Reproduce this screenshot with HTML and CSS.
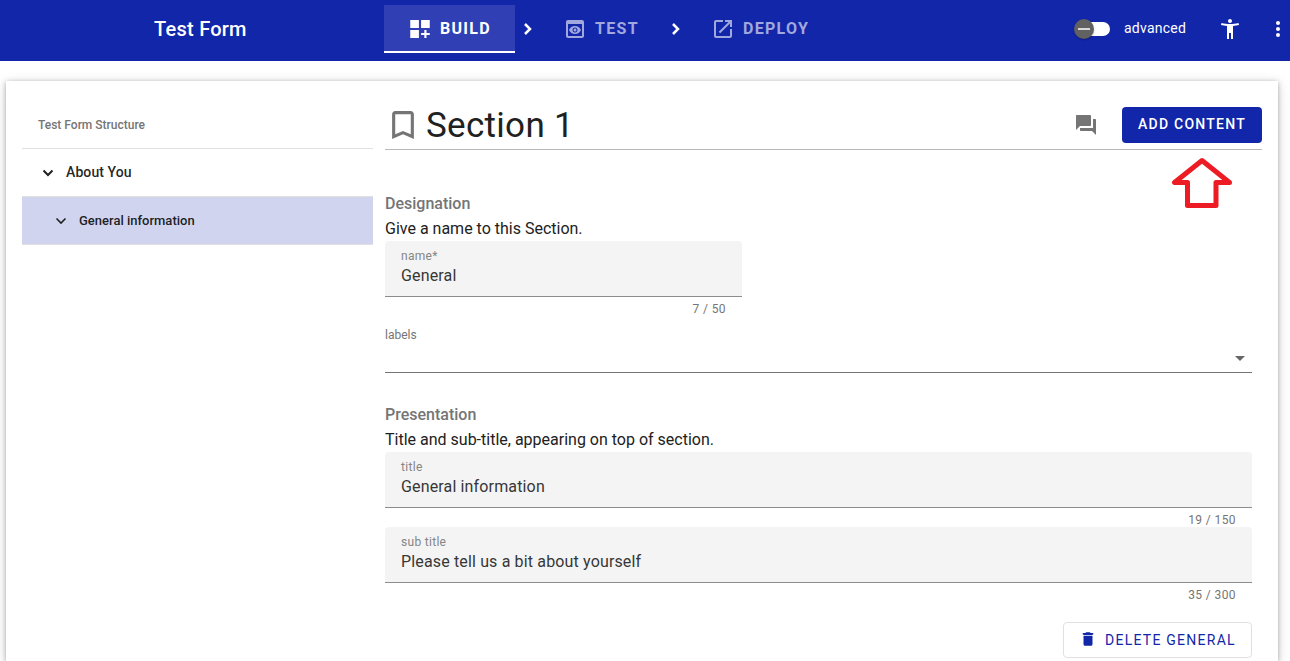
FILE: index.html
```html
<!DOCTYPE html>
<html lang="en">
<head>
<meta charset="utf-8">
<title>Test Form</title>
<link rel="stylesheet" href="styles.css">
</head>
<body>
<header class="topbar">
  <div class="form-name">Test Form</div>
  <nav class="steps">
    <a class="step active"><svg class="icon build-icon" viewBox="0 0 24 24" preserveAspectRatio="none"><path d="M3 3h8v8H3zM13 3h8v8h-8zM3 13h8v8H3zM18 13h-2v3h-3v2h3v3h2v-3h3v-2h-3z"/></svg><span>BUILD</span></a>
    <svg class="arrow" viewBox="0 0 10 14"><path d="M2 2l5 5-5 5"/></svg>
    <a class="step test"><svg class="icon" viewBox="0 0 24 24"><path d="M19 3H5c-1.110 0-2 .9-2 2v14c0 1.100.890 2 2 2h14c1.100 0 2-.9 2-2V5c0-1.100-.890-2-2-2zm0 16H5V7h14v12zm-5.500-6c0 .830-.670 1.500-1.500 1.500s-1.500-.670-1.500-1.500.670-1.500 1.500-1.500 1.500.670 1.500 1.500zM12 9c-2.730 0-5.060 1.660-6 4 .940 2.340 3.270 4 6 4s5.060-1.660 6-4c-.940-2.340-3.270-4-6-4zm0 6.500c-1.380 0-2.500-1.120-2.500-2.500s1.120-2.500 2.500-2.500 2.500 1.120 2.500 2.500-1.120 2.500-2.500 2.500z"/></svg><span>TEST</span></a>
    <svg class="arrow" viewBox="0 0 10 14"><path d="M2 2l5 5-5 5"/></svg>
    <a class="step deploy"><svg class="icon" viewBox="0 0 24 24"><path d="M19 19H5V5h7V3H5a2 2 0 0 0-2 2v14a2 2 0 0 0 2 2h14c1.100 0 2-.9 2-2v-7h-2v7zM14 3v2h3.590l-9.830 9.830 1.410 1.410L19 6.410V10h2V3h-7z"/></svg><span>DEPLOY</span></a>
  </nav>
  <div class="tools">
    <div class="switch"><div class="thumb"></div></div>
    <span class="switch-label">advanced</span>
    <svg class="icon person" viewBox="0 0 24 24"><path d="M20.500 6c-2.610.7-5.670 1-8.500 1s-5.890-.3-8.500-1L3 8c1.860.5 4 .830 6 1v13h2v-6h2v6h2V9c2-.170 4.140-.5 6-1l-.5-2zM12 6c1.100 0 2-.9 2-2s-.9-2-2-2-2 .9-2 2 .9 2 2 2z"/></svg>
    <svg class="icon" viewBox="0 0 24 24"><circle cx="12" cy="6" r="2"/><circle cx="12" cy="12" r="2"/><circle cx="12" cy="18" r="2"/></svg>
  </div>
</header>

<div class="card">
  <aside class="sidebar">
    <div class="side-title">Test Form Structure</div>
    <div class="node"><svg class="caret" viewBox="0 0 12 8"><path d="M1.500 1.500L6 6l4.500-4.500"/></svg>About You</div>
    <div class="node child"><svg class="caret" viewBox="0 0 12 8"><path d="M1.500 1.500L6 6l4.500-4.500"/></svg>General information</div>
  </aside>

  <main class="main">
    <div class="section-head">
      <svg class="bookmark" viewBox="3 1 18 22" preserveAspectRatio="none"><path d="M17 3H7c-1.100 0-2 .9-2 2v16l7-3 7 3V5c0-1.100-.9-2-2-2zm0 15l-5-2.180L7 18V5h10v13z"/></svg>
      <h1>Section 1</h1>
      <svg class="icon chat" viewBox="0 0 24 24"><path d="M21 6h-2v9H6v2c0 .550.450 1 1 1h11l4 4V7c0-.550-.450-1-1-1zm-4 6V3c0-.550-.450-1-1-1H3c-.550 0-1 .450-1 1v14l4-4h10c.550 0 1-.450 1-1z"/></svg>
      <div class="add">ADD CONTENT
        <svg class="pointer" viewBox="0 0 62 52"><path d="M31 3.500L3.500 25.500H16.500V48.500H45V25.500H58.500Z"/></svg>
      </div>
    </div>

    <div class="fields">
      <h2>Designation</h2>
      <p>Give a name to this Section.</p>
      <div class="field short"><label>name*</label><div class="value">General</div></div>
      <div class="count short">7 / 50</div>
      <div class="select"><span>labels</span><svg viewBox="0 0 10 5"><path d="M0 0h10L5 5z"/></svg></div>
      <h2 class="second">Presentation</h2>
      <p>Title and sub-title, appearing on top of section.</p>
      <div class="field"><label>title</label><div class="value">General information</div></div>
      <div class="count">19 / 150</div>
      <div class="field"><label>sub title</label><div class="value">Please tell us a bit about yourself</div></div>
      <div class="count">35 / 300</div>
      <div class="actions"><div class="delete"><svg viewBox="0 0 24 24"><path d="M6 19c0 1.100.9 2 2 2h8c1.100 0 2-.9 2-2V7H6v12zM19 4h-3.500l-1-1h-5l-1 1H5v2h14V4z M6 6h12v2H6z"/></svg><span>DELETE GENERAL</span></div></div>
    </div>
  </main>
</div>
</body>
</html>
```

FILE: styles.css
```css
* { box-sizing: border-box; }
html, body { height: 661px; overflow: hidden; }
body { margin: 0; background: #fff; font-family: Roboto, sans-serif; color: rgba(0,0,0,.87); }
h1, h2, p { margin: 0; }
svg { display: block; flex: none; }
.icon { width: 24px; height: 24px; fill: currentColor; }

.topbar { height: 61px; background: #1226aa; color: #fff; display: flex; }
.form-name { width: 384px; padding: 17px 0 0 154px; font-size: 20px; line-height: 24px; font-weight: 500; letter-spacing: .25px; }
.steps { display: flex; padding-top: 5px; height: 53px; align-items: flex-start; }
.step { display: flex; height: 48px; align-items: center; font-size: 16px; font-weight: 700; letter-spacing: 1.300px; color: #a0a8dd; }
.step span { line-height: 20px; margin-top: 0; }
.step.active { width: 131px; padding-left: 23px; background: #303fb4; color: #fff; border-bottom: 2px solid #fff; }
.step.active span { margin-top: 2px; margin-left: 7px; }
.build-icon { width: 26px; margin-top: 2px; }
.arrow { width: 10px; height: 14px; margin: 17px 0 0 8px; fill: none; stroke: #fff; stroke-width: 2.500; }
.test { margin-left: 30px; width: 107px; }
.test span, .deploy span { margin-left: 8px; }
.test + .arrow { margin-left: 1px; }
.deploy { margin-left: 30px; }
.tools { margin-left: auto; display: flex; padding-top: 17px; }
.switch { width: 34px; height: 14px; margin-top: 5px; border-radius: 7px; background: #fff; }
.thumb { width: 20px; height: 20px; margin: -3px 0 0 -2px; border-radius: 50%; background: #616161; display: flex; align-items: center; justify-content: center; box-shadow: 0 1px 2px rgba(0,0,0,.3); }
.thumb::before { content: ""; width: 12px; height: 2px; background: #d8d8d8; }
.switch-label { width: 94px; margin-left: 14px; font-size: 14px; line-height: 22px; letter-spacing: .25px; }
.person { margin-right: 24px; }

.card { margin: 20px 12px 0 6px; height: 580px; padding: 20px 16px 0; display: flex; background: #fff; box-shadow: 0 1px 5px rgba(0,0,0,.3), 0 3px 14px rgba(0,0,0,.12); }
.sidebar { width: 351px; flex: none; }
.side-title { height: 48px; padding-left: 16px; border-bottom: 1px solid #e0e0e0; font-size: 12px; line-height: 48px; font-weight: 500; color: #757575; }
.node { height: 48px; padding: 0 0 2px 20px; display: flex; align-items: center; font-size: 14px; font-weight: 500; letter-spacing: .1px; border-bottom: 1px solid #e0e0e0; }
.caret { width: 12px; height: 8px; margin: 2px 12px 0 0; fill: none; stroke: #212121; stroke-width: 2; }
.node.child { background: #d0d4ee; padding: 0 0 0 33px; font-size: 13px; letter-spacing: 0; }
.child .caret { margin-top: 0; stroke-width: 1.600; }

.main { width: 877px; margin-left: 12px; }
.section-head { height: 49px; border-bottom: 1px solid #b8b8b8; display: flex; align-items: flex-start; }
.bookmark { width: 28px; height: 34px; margin: 7px 0 0 4px; fill: #757575; }
h1 { font-size: 35px; line-height: 46px; font-weight: 400; letter-spacing: .3px; margin: 2px 0 0 9px; color: #212121; }
.chat { margin: 12px 24px 0 auto; color: #757575; }
.add { position: relative; width: 140px; height: 36px; margin-top: 6px; border-radius: 4px; background: #1226aa; color: #fff; font-size: 14px; line-height: 35px; font-weight: 500; letter-spacing: 1.25px; padding-left: 16px; white-space: nowrap; }
.pointer { position: absolute; left: 49px; top: 50px; width: 62px; height: 52px; fill: none; stroke: #ed1c24; stroke-width: 5; stroke-linejoin: round; }

.fields { width: 867px; padding-top: 41px; }
h2 { font-size: 16px; line-height: 26px; font-weight: 500; color: #757575; }
p { font-size: 16px; line-height: 25px; height: 24px; margin-top: -1px; padding-bottom: 1px; color: #212121; }
p + .field { margin-top: 1px; }
.field { height: 56px; padding: 7px 16px 0; border-radius: 4px 4px 0 0; background: #f4f4f4; border-bottom: 1px solid #8c8c8c; }
.short { width: 357px; }
.field label { display: block; font-size: 12px; line-height: 16px; letter-spacing: .3px; color: #858585; }
.value { font-size: 16px; line-height: 24px; letter-spacing: .15px; color: #373737; }
.count { height: 19px; padding-right: 16px; font-size: 12px; line-height: 24px; text-align: right; letter-spacing: .4px; color: #757575; }
.select { height: 57px; display: flex; justify-content: space-between; border-bottom: 1px solid #757575; padding: 11px 7px 0 0; font-size: 12px; line-height: 16px; color: #757575; }
.select svg { width: 10px; height: 5px; margin-top: 29px; fill: #666; }
.second { margin-top: 29px; }
.actions { display: flex; justify-content: flex-end; padding-top: 20px; }
.delete { display: flex; align-items: center; width: 189px; height: 36px; padding-left: 15px; border: 1px solid #e0e0e0; border-radius: 4px; color: #1226aa; font-size: 14px; letter-spacing: 1.25px; white-space: nowrap; }
.delete svg { width: 18px; height: 18px; margin: -3px 8px 0 0; fill: #1226aa; }
```
